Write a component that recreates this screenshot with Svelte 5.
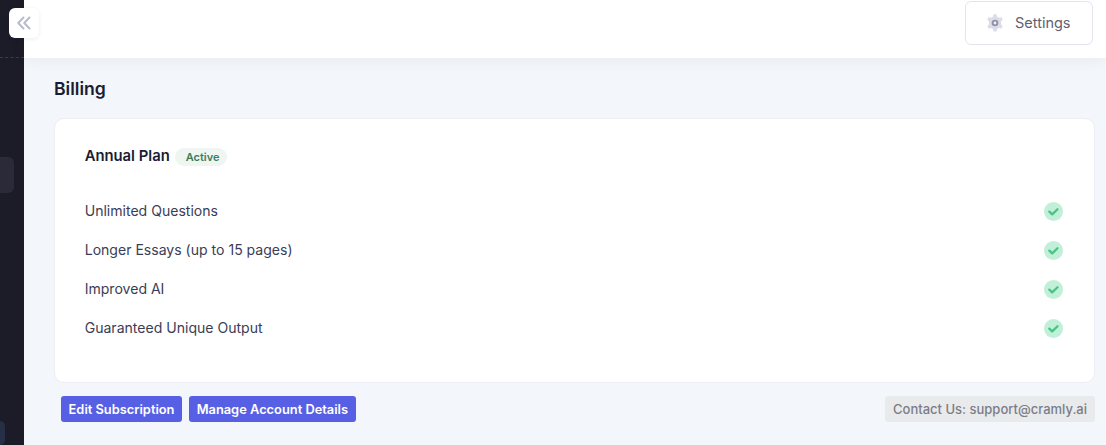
<script>
	const features = [
		'Unlimited Questions',
		'Longer Essays (up to 15 pages)',
		'Improved AI',
		'Guaranteed Unique Output'
	];
</script>

<div class="layout">
	<aside class="sidebar">
		<div class="side-top"></div>
		<div class="side-item"></div>
		<div class="side-item bottom"></div>
	</aside>

	<button class="collapse" aria-label="Collapse sidebar">
		<svg width="16" height="16" viewBox="0 0 16 16" fill="none" stroke="#b9bbcb" stroke-width="2" stroke-linecap="round" stroke-linejoin="round">
			<path d="M7.5 2.5 2.2 8l5.3 5.5" />
			<path d="M13.5 2.5 8.2 8l5.3 5.5" />
		</svg>
	</button>

	<div class="main">
		<header class="topbar">
			<button class="settings">
				<svg width="20" height="20" viewBox="0 0 18 18">
					<path fill="#dcdde8" d="M7.6 1.2h2.8l.5 2.1 1.6.9 2.1-.6 1.4 2.4-1.6 1.5v2.8l1.6 1.5-1.4 2.4-2.1-.6-1.6.9-.5 2.1H7.6l-.5-2.1-1.6-.9-2.1.6L2 11.9l1.6-1.5V7.6L2 6.1l1.4-2.4 2.1.6 1.6-.9z" />
					<circle cx="9" cy="9" r="3" fill="#8f91a8" />
					<circle cx="9" cy="9" r="1.3" fill="#eeeef4" />
				</svg>
				<span>Settings</span>
			</button>
		</header>

		<section class="content">
			<h1>Billing</h1>

			<div class="card">
				<div class="plan">
					<span class="plan-name">Annual Plan</span>
					<span class="badge">Active</span>
				</div>

				<ul>
					{#each features as feature}
						<li>
							<span class="label">{feature}</span>
							<svg class="check" width="19" height="19" viewBox="0 0 19 19">
								<circle cx="9.5" cy="9.5" r="9.5" fill="#c2efd8" />
								<path d="M5.3 9.6l2.9 2.8 5.3-5.2" fill="none" stroke="#45c586" stroke-width="2.3" stroke-linecap="round" stroke-linejoin="round" />
							</svg>
						</li>
					{/each}
				</ul>
			</div>

			<div class="actions">
				<button class="primary">Edit Subscription</button>
				<button class="primary">Manage Account Details</button>
				<span class="contact">Contact Us: support@cramly.ai</span>
			</div>
		</section>
	</div>
</div>

<style>
	:global(body) {
		margin: 0;
		overflow: hidden;
		font-family: Inter, 'Liberation Sans', sans-serif;
	}
	.layout {
		display: flex;
		height: 445px;
		position: relative;
		background: #f3f6fa;
	}
	.sidebar {
		width: 24px;
		flex-shrink: 0;
		display: flex;
		flex-direction: column;
		background: #1c1c29;
	}
	.side-top {
		height: 57px;
		border-bottom: 1px dashed #3a3a4a;
	}
	.side-item {
		width: 14px;
		height: 36px;
		margin-top: 99px;
		background: #2a2a39;
		border-radius: 0 6px 6px 0;
	}
	.side-item.bottom {
		margin-top: auto;
		width: 5px;
		height: 24px;
		background: #262f45;
	}
	.collapse {
		position: absolute;
		z-index: 2;
		left: 9px;
		top: 8px;
		width: 30px;
		height: 30px;
		padding: 0;
		display: flex;
		align-items: center;
		justify-content: center;
		background: #fff;
		border: none;
		border-radius: 6px;
		box-shadow: 0 1px 4px rgba(30, 30, 60, 0.08);
	}
	.main {
		flex: 1;
		min-width: 0;
		display: flex;
		flex-direction: column;
	}
	.topbar {
		position: relative;
		height: 58px;
		box-sizing: border-box;
		padding: 1px 13px 0 0;
		display: flex;
		justify-content: flex-end;
		align-items: flex-start;
		background: #fff;
		box-shadow: 0 2px 14px rgba(30, 30, 60, 0.06);
	}
	.settings {
		width: 128px;
		height: 44px;
		display: flex;
		align-items: center;
		gap: 10px;
		padding: 0 0 2px 19px;
		background: #fff;
		border: 1px solid #e4e4ee;
		border-radius: 6px;
		font: 400 14.5px Inter, 'Liberation Sans', sans-serif;
		color: #5f6170;
	}
	.settings svg {
		margin-top: 2px;
	}
	.content {
		flex: 1;
		padding: 21px 11px 0 30px;
	}
	h1 {
		margin: 0;
		font-size: 17.6px;
		line-height: 20px;
		font-weight: 600;
		color: #1a1c33;
	}
	.card {
		margin-top: 19px;
		height: 265px;
		box-sizing: border-box;
		padding: 28px 31px 0 29.7px;
		background: #fff;
		border: 1px solid #eceef3;
		border-radius: 10px;
	}
	.plan {
		display: flex;
		align-items: flex-start;
		gap: 5px;
		height: 19px;
	}
	.plan-name {
		font-size: 14.8px;
		line-height: 18px;
		font-weight: 600;
		color: #1a1c33;
	}
	.badge {
		margin-top: 1px;
		padding: 0 8px 0 11px;
		height: 18px;
		line-height: 19px;
		border-radius: 9px;
		background: #eff5f1;
		font-size: 11px;
		font-weight: 600;
		color: #3d7d5a;
	}
	ul {
		list-style: none;
		margin: 36px 0 0;
		padding: 0;
		display: flex;
		flex-direction: column;
		gap: 20px;
	}
	li {
		display: flex;
		justify-content: space-between;
		align-items: center;
		height: 19px;
		font-size: 14.05px;
		color: #3b3d56;
	}
	.label {
		padding-bottom: 2px;
	}
	.check {
		flex-shrink: 0;
	}
	.actions {
		margin-top: 13px;
		padding: 0 0 0 7px;
		display: flex;
		align-items: center;
		gap: 7px;
	}
	.primary {
		height: 26px;
		padding: 0 7.6px;
		background: #5760e4;
		border: none;
		border-radius: 3px;
		font: 600 12.85px Inter, 'Liberation Sans', sans-serif;
		color: #fff;
	}
	.contact {
		margin-left: auto;
		height: 26px;
		line-height: 26px;
		padding: 0 8px;
		background: #e9eaec;
		border-radius: 3px;
		font-size: 13px;
		font-weight: 500;
		color: #7b7d88;
	}
</style>
